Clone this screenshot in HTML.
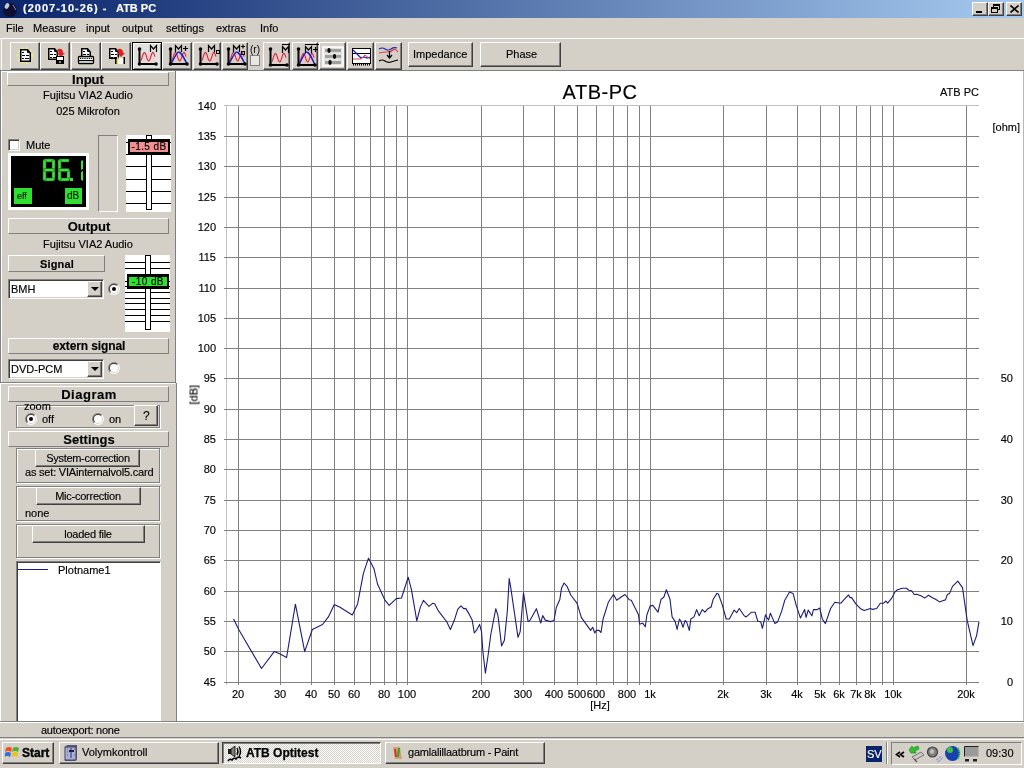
<!DOCTYPE html><html><head><meta charset="utf-8"><style>
*{margin:0;padding:0;box-sizing:border-box}
html,body{width:1024px;height:768px;overflow:hidden;background:#d4d0c8;font-family:"Liberation Sans", sans-serif;position:relative}
.t{position:absolute;white-space:nowrap;line-height:1;font-family:"Liberation Sans", sans-serif;will-change:transform;-webkit-text-stroke:0.15px currentColor}
.btn{position:absolute;background:#d4d0c8;border-top:1px solid #fff;border-left:1px solid #fff;border-right:1px solid #404040;border-bottom:1px solid #404040;box-shadow:inset -1px -1px 0 #808080}
.pnl{position:absolute;background:#d4d0c8;border-top:1px solid #fff;border-left:1px solid #fff;border-right:1px solid #808080;border-bottom:1px solid #808080}
.abs{position:absolute}
</style></head><body><div class="abs" style="left:0;top:0;width:1024px;height:18px;background:linear-gradient(to right,#0a246a,#a6caf0)"></div>
<svg class="abs" style="left:1px;top:1px" width="17" height="17" viewBox="0 0 17 17"><circle cx="9" cy="9" r="7" fill="#0d1030"/><ellipse cx="6" cy="5" rx="2" ry="3" fill="#c8c8d8" transform="rotate(30 6 5)"/><path d="M12 4 L15 9" stroke="#8890b0" stroke-width="1"/></svg>
<div class="t" style="left:23px;top:3px;font-size:11px;font-weight:bold;color:#fff;letter-spacing:1px">(2007-10-26) -</div>
<div class="t" style="left:116px;top:3px;font-size:11px;font-weight:bold;color:#fff;">ATB PC</div>
<div class="btn" style="left:972px;top:2px;width:16px;height:14px;"><div class="abs" style="left:3px;top:8px;width:6px;height:2px;background:#000"></div></div>
<div class="btn" style="left:988px;top:2px;width:16px;height:14px;"><div class="abs" style="left:4px;top:1px;width:7px;height:6px;border:1px solid #000;border-top-width:2px"></div><div class="abs" style="left:2px;top:4px;width:7px;height:6px;border:1px solid #000;border-top-width:2px;background:#d4d0c8"></div></div>
<div class="btn" style="left:1006px;top:2px;width:16px;height:14px;"><svg class="abs" style="left:3px;top:2px" width="9" height="8" viewBox="0 0 9 8"><path d="M0.5 0.5 L8.5 7.5 M8.5 0.5 L0.5 7.5" stroke="#000" stroke-width="1.6"/></svg></div>
<div class="t" style="left:6px;top:23px;font-size:11px;font-weight:normal;color:#000;">File</div>
<div class="t" style="left:33px;top:23px;font-size:11px;font-weight:normal;color:#000;">Measure</div>
<div class="t" style="left:86px;top:23px;font-size:11px;font-weight:normal;color:#000;">input</div>
<div class="t" style="left:122px;top:23px;font-size:11px;font-weight:normal;color:#000;">output</div>
<div class="t" style="left:166px;top:23px;font-size:11px;font-weight:normal;color:#000;">settings</div>
<div class="t" style="left:216px;top:23px;font-size:11px;font-weight:normal;color:#000;">extras</div>
<div class="t" style="left:260px;top:23px;font-size:11px;font-weight:normal;color:#000;">Info</div>
<div class="abs" style="left:0;top:38px;width:1024px;height:1px;background:#fff"></div>
<div class="abs" style="left:1px;top:38px;width:1px;height:32px;background:#fff"></div>
<div class="abs" style="left:0;top:70px;width:1024px;height:1px;background:#808080"></div>
<div class="btn" style="left:10px;top:42px;width:30px;height:28px;"></div>
<div class="btn" style="left:40px;top:42px;width:30px;height:28px;"></div>
<div class="btn" style="left:71px;top:42px;width:30px;height:28px;"></div>
<div class="btn" style="left:101px;top:42px;width:30px;height:28px;"></div>
<div class="abs" style="left:132px;top:42px;width:30px;height:28px;border:1px solid #000;background:#e2e0dc;box-shadow:inset 1px 1px 0 #fff, inset -1px -1px 0 #808080"></div>
<div class="btn" style="left:162px;top:42px;width:30px;height:28px;"></div>
<div class="btn" style="left:193px;top:42px;width:28px;height:28px;"></div>
<div class="btn" style="left:222px;top:42px;width:26px;height:28px;"></div>
<div class="btn" style="left:263px;top:42px;width:27px;height:28px;"></div>
<div class="btn" style="left:292px;top:42px;width:26px;height:28px;"></div>
<div class="btn" style="left:319px;top:42px;width:27px;height:28px;"></div>
<div class="btn" style="left:347px;top:42px;width:27px;height:28px;"></div>
<div class="btn" style="left:375px;top:42px;width:27px;height:28px;"></div>
<div class="btn" style="left:408px;top:42px;width:65px;height:25px;"></div>
<div class="t" style="left:413px;top:49px;font-size:11px;font-weight:normal;color:#000;">Impedance</div>
<div class="btn" style="left:480px;top:42px;width:81px;height:25px;"></div>
<div class="t" style="left:506px;top:49px;font-size:11px;font-weight:normal;color:#000;">Phase</div>
<svg class="abs" style="left:0;top:0" width="410" height="72" viewBox="0 0 410 72"><circle cx="25" cy="55.5" r="7.5" fill="none" stroke="#f0f070" stroke-width="2" stroke-dasharray="2 2.5" opacity="0.9"/><path d="M20.75 49.75 H27.5 L30.25 53 V61.25 H20.75 Z" fill="#fff" stroke="#000" stroke-width="1.5" stroke-linejoin="miter"/><path d="M27.5 50 V52.5 H30" fill="none" stroke="#000" stroke-width="1"/><rect x="22" y="52" width="2" height="1" fill="#000"/><rect x="22" y="55" width="3" height="1" fill="#000"/><rect x="26" y="55" width="3" height="1" fill="#000"/><rect x="22" y="58" width="2" height="1" fill="#000"/><rect x="25" y="58" width="4" height="1" fill="#000"/><path d="M48.75 48.75 H54.5 L57.25 52 V59.25 H48.75 Z" fill="#fff" stroke="#000" stroke-width="1.5" stroke-linejoin="miter"/><path d="M54.5 49 V51.5 H57" fill="none" stroke="#000" stroke-width="1"/><rect x="50" y="51" width="2" height="1" fill="#000"/><rect x="50" y="54" width="3" height="1" fill="#000"/><rect x="54" y="54" width="2" height="1" fill="#000"/><rect x="50" y="57" width="2" height="1" fill="#000"/><rect x="53" y="57" width="3" height="1" fill="#000"/><path d="M58 49 Q63 48 63 53 L65 53 L61 57 L57 53 L59 53 Q59 51 57 51Z" fill="#e02020"/><rect x="56" y="56" width="8" height="8" fill="#000"/><rect x="57" y="57" width="6" height="3" fill="#fff"/><rect x="59" y="61" width="2" height="2" fill="#888"/><path d="M81.75 48.75 H87.5 L90.25 52 V57.25 H81.75 Z" fill="#fff" stroke="#000" stroke-width="1.5" stroke-linejoin="miter"/><path d="M87.5 49 V51.5 H90" fill="none" stroke="#000" stroke-width="1"/><rect x="83" y="51" width="2" height="1" fill="#000"/><rect x="83" y="54" width="3" height="1" fill="#000"/><rect x="87" y="54" width="2" height="1" fill="#000"/><rect x="78.5" y="56.5" width="15" height="7" rx="1" fill="#fff" stroke="#000" stroke-width="1.3"/><rect x="79" y="60" width="14" height="1.2" fill="#000"/><rect x="80.0" y="57.8" width="1" height="1.2" fill="#000"/><rect x="81.8" y="57.8" width="1" height="1.2" fill="#000"/><rect x="83.6" y="57.8" width="1" height="1.2" fill="#000"/><rect x="85.4" y="57.8" width="1" height="1.2" fill="#000"/><rect x="87.2" y="57.8" width="1" height="1.2" fill="#000"/><rect x="89.0" y="57.8" width="1" height="1.2" fill="#000"/><rect x="90.8" y="57.8" width="1" height="1.2" fill="#000"/><path d="M109.75 48.75 H115.5 L118.25 52 V58.25 H109.75 Z" fill="#fff" stroke="#000" stroke-width="1.5" stroke-linejoin="miter"/><path d="M115.5 49 V51.5 H118" fill="none" stroke="#000" stroke-width="1"/><rect x="111" y="51" width="2" height="1" fill="#000"/><rect x="111" y="54" width="3" height="1" fill="#000"/><rect x="115" y="54" width="2" height="1" fill="#000"/><rect x="111" y="57" width="2" height="1" fill="#000"/><rect x="114" y="57" width="3" height="1" fill="#000"/><path d="M118 49 Q123 48 123 53 L125 53 L121 57 L117 53 L119 53 Q119 51 117 51Z" fill="#e02020"/><rect x="115" y="57" width="1.5" height="7" fill="#000"/><rect x="117" y="57" width="1.5" height="7" fill="#e0e040"/><rect x="118.5" y="58" width="5" height="6" fill="#fff"/><rect x="123.5" y="57" width="1.5" height="7" fill="#000"/><rect x="141" y="53" width="14" height="9" fill="#f0c8c8" opacity="0.55"/><path d="M140.6 60.8 L141.1 60.1 L141.6 59.0 L142.0 57.6 L142.5 56.1 L143.0 54.6 L143.5 53.5 L144.0 52.7 L144.4 52.5 L144.9 52.8 L145.4 53.6 L145.9 54.7 L146.4 56.2 L146.8 57.7 L147.3 59.0 L147.8 60.1 L148.3 60.8 L148.8 61.0 L149.2 60.6 L149.7 59.8 L150.2 58.6 L150.7 57.1 L151.2 55.6 L151.6 54.3 L152.1 53.2 L152.6 52.6 L153.1 52.5 L153.6 53.0 L154.0 53.9 L154.5 55.1 L155.0 56.6" fill="none" stroke="#d02838" stroke-width="1.1" stroke-linejoin="round"/><rect x="138.5" y="48" width="2" height="16" fill="#000"/><rect x="139" y="63" width="17" height="2" fill="#000"/><circle cx="139.5" cy="49" r="1.8" fill="#000"/><circle cx="139.5" cy="64" r="1.8" fill="#000"/><circle cx="156" cy="64" r="1.8" fill="#000"/><path d="M150.5 52 V45.5 L153.5 49 L156.5 45.5 V52" fill="none" stroke="#000" stroke-width="1.2"/><rect x="172" y="53" width="14" height="9" fill="#f0c8c8" opacity="0.55"/><path d="M171.6 60.8 L172.1 60.1 L172.6 59.0 L173.0 57.6 L173.5 56.1 L174.0 54.6 L174.5 53.5 L175.0 52.7 L175.4 52.5 L175.9 52.8 L176.4 53.6 L176.9 54.7 L177.4 56.2 L177.8 57.7 L178.3 59.0 L178.8 60.1 L179.3 60.8 L179.8 61.0 L180.2 60.6 L180.7 59.8 L181.2 58.6 L181.7 57.1 L182.2 55.6 L182.6 54.3 L183.1 53.2 L183.6 52.6 L184.1 52.5 L184.6 53.0 L185.0 53.9 L185.5 55.1 L186.0 56.6" fill="none" stroke="#d02838" stroke-width="1.1" stroke-linejoin="round"/><path d="M171 64 C175 56 177 52 178.5 52 C181 52 183 56 187 64" fill="none" stroke="#2020c0" stroke-width="1.5"/><rect x="169.5" y="48" width="2" height="16" fill="#000"/><rect x="170" y="63" width="17" height="2" fill="#000"/><circle cx="170.5" cy="49" r="1.8" fill="#000"/><circle cx="170.5" cy="64" r="1.8" fill="#000"/><circle cx="187" cy="64" r="1.8" fill="#000"/><path d="M175.5 52 V45.5 L178.5 49 L181.5 45.5 V52" fill="none" stroke="#000" stroke-width="1.2"/><path d="M183 48.5 H188 M185.5 46 V51" stroke="#000" stroke-width="1.2"/><rect x="202" y="53" width="14" height="9" fill="#f0c8c8" opacity="0.55"/><path d="M201.6 60.8 L202.1 60.1 L202.6 59.0 L203.0 57.6 L203.5 56.1 L204.0 54.6 L204.5 53.5 L205.0 52.7 L205.4 52.5 L205.9 52.8 L206.4 53.6 L206.9 54.7 L207.4 56.2 L207.8 57.7 L208.3 59.0 L208.8 60.1 L209.3 60.8 L209.8 61.0 L210.2 60.6 L210.7 59.8 L211.2 58.6 L211.7 57.1 L212.2 55.6 L212.6 54.3 L213.1 53.2 L213.6 52.6 L214.1 52.5 L214.6 53.0 L215.0 53.9 L215.5 55.1 L216.0 56.6" fill="none" stroke="#d02838" stroke-width="1.1" stroke-linejoin="round"/><rect x="199.5" y="48" width="2" height="16" fill="#000"/><rect x="200" y="63" width="17" height="2" fill="#000"/><circle cx="200.5" cy="49" r="1.8" fill="#000"/><circle cx="200.5" cy="64" r="1.8" fill="#000"/><circle cx="217" cy="64" r="1.8" fill="#000"/><path d="M208.5 52 V45.5 L211.5 49 L214.5 45.5 V52" fill="none" stroke="#000" stroke-width="1.2"/><rect x="216.5" y="50.5" width="3" height="3" fill="none" stroke="#000" stroke-width="1"/><rect x="230" y="53" width="14" height="9" fill="#f0c8c8" opacity="0.55"/><path d="M229.6 60.8 L230.1 60.1 L230.6 59.0 L231.0 57.6 L231.5 56.1 L232.0 54.6 L232.5 53.5 L233.0 52.7 L233.4 52.5 L233.9 52.8 L234.4 53.6 L234.9 54.7 L235.4 56.2 L235.8 57.7 L236.3 59.0 L236.8 60.1 L237.3 60.8 L237.8 61.0 L238.2 60.6 L238.7 59.8 L239.2 58.6 L239.7 57.1 L240.2 55.6 L240.6 54.3 L241.1 53.2 L241.6 52.6 L242.1 52.5 L242.6 53.0 L243.0 53.9 L243.5 55.1 L244.0 56.6" fill="none" stroke="#d02838" stroke-width="1.1" stroke-linejoin="round"/><path d="M229 64 C233 56 235 52 236.5 52 C239 52 241 56 245 64" fill="none" stroke="#2020c0" stroke-width="1.5"/><rect x="227.5" y="48" width="2" height="16" fill="#000"/><rect x="228" y="63" width="17" height="2" fill="#000"/><circle cx="228.5" cy="49" r="1.8" fill="#000"/><circle cx="228.5" cy="64" r="1.8" fill="#000"/><circle cx="245" cy="64" r="1.8" fill="#000"/><path d="M233.5 52 V45.5 L236.5 49 L239.5 45.5 V52" fill="none" stroke="#000" stroke-width="1.2"/><path d="M241 46.5 H245 M243 44.5 V48.5" stroke="#000" stroke-width="1.1"/><rect x="241.5" y="51.5" width="3" height="3" fill="none" stroke="#000"/><text x="250" y="53" font-family="Liberation Sans" font-size="10">(r)</text><rect x="250.5" y="55.5" width="9" height="10" fill="#e8e6e2" stroke="#808080"/><rect x="272" y="53" width="14" height="10" fill="#f0c8c8" opacity="0.55"/><path d="M271.6 61.8 L272.1 61.1 L272.6 60.0 L273.0 58.6 L273.5 57.1 L274.0 55.6 L274.5 54.5 L275.0 53.7 L275.4 53.5 L275.9 53.8 L276.4 54.6 L276.9 55.7 L277.4 57.2 L277.8 58.7 L278.3 60.0 L278.8 61.1 L279.3 61.8 L279.8 62.0 L280.2 61.6 L280.7 60.8 L281.2 59.6 L281.7 58.1 L282.2 56.6 L282.6 55.3 L283.1 54.2 L283.6 53.6 L284.1 53.5 L284.6 54.0 L285.0 54.9 L285.5 56.1 L286.0 57.6" fill="none" stroke="#d02838" stroke-width="1.1" stroke-linejoin="round"/><rect x="269.5" y="48" width="2" height="17" fill="#000"/><rect x="270" y="64" width="17" height="2" fill="#000"/><circle cx="270.5" cy="49" r="1.8" fill="#000"/><circle cx="270.5" cy="65" r="1.8" fill="#000"/><circle cx="287" cy="65" r="1.8" fill="#000"/><path d="M282.5 53 V46.5 L285.5 50 L288.5 46.5 V53" fill="none" stroke="#000" stroke-width="1.2"/><rect x="282" y="44" width="8" height="1" fill="#000"/><rect x="300" y="53" width="14" height="10" fill="#f0c8c8" opacity="0.55"/><path d="M299.6 61.8 L300.1 61.1 L300.6 60.0 L301.0 58.6 L301.5 57.1 L302.0 55.6 L302.5 54.5 L303.0 53.7 L303.4 53.5 L303.9 53.8 L304.4 54.6 L304.9 55.7 L305.4 57.2 L305.8 58.7 L306.3 60.0 L306.8 61.1 L307.3 61.8 L307.8 62.0 L308.2 61.6 L308.7 60.8 L309.2 59.6 L309.7 58.1 L310.2 56.6 L310.6 55.3 L311.1 54.2 L311.6 53.6 L312.1 53.5 L312.6 54.0 L313.0 54.9 L313.5 56.1 L314.0 57.6" fill="none" stroke="#d02838" stroke-width="1.1" stroke-linejoin="round"/><path d="M299 65 C303 56 305 52 306.5 52 C309 52 311 56 315 65" fill="none" stroke="#2020c0" stroke-width="1.5"/><rect x="297.5" y="48" width="2" height="17" fill="#000"/><rect x="298" y="64" width="17" height="2" fill="#000"/><circle cx="298.5" cy="49" r="1.8" fill="#000"/><circle cx="298.5" cy="65" r="1.8" fill="#000"/><circle cx="315" cy="65" r="1.8" fill="#000"/><path d="M305.5 53 V46.5 L308.5 50 L311.5 46.5 V53" fill="none" stroke="#000" stroke-width="1.2"/><path d="M313 49.5 H318 M315.5 47 V52" stroke="#000" stroke-width="1.2"/><rect x="305" y="44" width="14" height="1" fill="#000"/><rect x="323" y="47" width="20" height="19" fill="#e4e2de" stroke="#fff" stroke-width="1.5"/><rect x="325" y="49" width="16" height="3" fill="#a0a0a0"/><ellipse cx="329" cy="50.5" rx="1.6" ry="2.4" fill="#000"/><rect x="325" y="55" width="16" height="3" fill="#a0a0a0"/><ellipse cx="334.5" cy="56.5" rx="1.6" ry="2.4" fill="#000"/><rect x="325" y="61" width="16" height="3" fill="#a0a0a0"/><ellipse cx="330" cy="62.5" rx="1.6" ry="2.4" fill="#000"/><rect x="352.5" y="48.5" width="18" height="15" fill="#fff" stroke="#000"/><rect x="352" y="53" width="19" height="1" fill="#000"/><path d="M353 50 L361 58 L364 57 L367 58 L370 57" fill="none" stroke="#2020b0" stroke-width="1.3"/><path d="M353 59 L361 59 L365 55 L370 59" fill="none" stroke="#e04040" stroke-width="1"/><rect x="353" y="64" width="1" height="1.5" fill="#000"/><rect x="355" y="64" width="1" height="1.5" fill="#000"/><rect x="357" y="64" width="1" height="1.5" fill="#000"/><rect x="359" y="64" width="1" height="1.5" fill="#000"/><rect x="361" y="64" width="1" height="1.5" fill="#000"/><rect x="363" y="64" width="1" height="1.5" fill="#000"/><rect x="365" y="64" width="1" height="1.5" fill="#000"/><rect x="367" y="64" width="1" height="1.5" fill="#000"/><rect x="369" y="64" width="1" height="1.5" fill="#000"/><path d="M379 49 Q382 47 385 49 T391 49 T397 48" fill="none" stroke="#2020c0" stroke-width="1.2"/><path d="M379 53 Q383 52 387 52 T393 50 T398 52" fill="none" stroke="#e04040" stroke-width="1.2"/><path d="M389.5 51 V57 M387 55 L389.5 58 L392 55" fill="none" stroke="#000" stroke-width="1.2"/><path d="M379 61 Q382 59 385 61 T391 62 T398 60" fill="none" stroke="#000" stroke-width="1.2"/></svg>
<div class="abs" style="left:0;top:71px;width:1px;height:312px;background:#808080"></div>
<div class="abs" style="left:1px;top:71px;width:1px;height:311px;background:#fff"></div>
<div class="abs" style="left:1px;top:71px;width:174px;height:1px;background:#fff"></div>
<div class="abs" style="left:0;top:382px;width:176px;height:1px;background:#808080"></div>
<div class="abs" style="left:0;top:383px;width:176px;height:1px;background:#fff"></div>
<div class="abs" style="left:0;top:383px;width:1px;height:338px;background:#fff"></div>
<div class="abs" style="left:175px;top:71px;width:1px;height:312px;background:#808080"></div>
<div class="pnl" style="left:7px;top:72px;width:162px;height:14px;"></div>
<div class="t" style="left:-62.0px;width:300px;text-align:center;top:73.0px;font-size:13px;font-weight:bold;color:#000;letter-spacing:0px">Input</div>
<div class="t" style="left:-62px;width:300px;text-align:center;top:90px;font-size:11px;font-weight:normal;color:#000;">Fujitsu VIA2 Audio</div>
<div class="t" style="left:-62px;width:300px;text-align:center;top:106px;font-size:11px;font-weight:normal;color:#000;">025 Mikrofon</div>
<div class="abs" style="left:8px;top:139px;width:12px;height:12px;background:#fff;border-top:1px solid #808080;border-left:1px solid #808080;border-right:1px solid #fff;border-bottom:1px solid #fff;box-shadow:inset 1px 1px 0 #404040,inset -1px -1px 0 #d4d0c8"></div>
<div class="t" style="left:26px;top:140px;font-size:11px;font-weight:normal;color:#000;">Mute</div>
<div class="abs" style="left:8px;top:153px;width:81px;height:57px;background:#fff"></div>
<div class="abs" style="left:11px;top:156px;width:75px;height:51px;background:#000"></div>
<svg class="abs" style="left:0;top:0" width="176" height="400"><rect x="44" y="159" width="10" height="3" fill="#40e040" stroke="#1a5a1a" stroke-width="0.5"/><rect x="52" y="160" width="3" height="10.0" fill="#40e040" stroke="#1a5a1a" stroke-width="0.5"/><rect x="52" y="170.0" width="3" height="10.0" fill="#40e040" stroke="#1a5a1a" stroke-width="0.5"/><rect x="44" y="178" width="10" height="3" fill="#40e040" stroke="#1a5a1a" stroke-width="0.5"/><rect x="43" y="170.0" width="3" height="10.0" fill="#40e040" stroke="#1a5a1a" stroke-width="0.5"/><rect x="43" y="160" width="3" height="10.0" fill="#40e040" stroke="#1a5a1a" stroke-width="0.5"/><rect x="44" y="168.5" width="10" height="3" fill="#40e040" stroke="#1a5a1a" stroke-width="0.5"/><rect x="59" y="159" width="10" height="3" fill="#40e040" stroke="#1a5a1a" stroke-width="0.5"/><rect x="67" y="170.0" width="3" height="10.0" fill="#40e040" stroke="#1a5a1a" stroke-width="0.5"/><rect x="59" y="178" width="10" height="3" fill="#40e040" stroke="#1a5a1a" stroke-width="0.5"/><rect x="58" y="170.0" width="3" height="10.0" fill="#40e040" stroke="#1a5a1a" stroke-width="0.5"/><rect x="58" y="160" width="3" height="10.0" fill="#40e040" stroke="#1a5a1a" stroke-width="0.5"/><rect x="59" y="168.5" width="10" height="3" fill="#40e040" stroke="#1a5a1a" stroke-width="0.5"/><path d="M81 161 L83 160 V169 L81 170Z M81 172 L83 171 V181 L81 180Z" fill="#40e040"/><rect x="70" y="178" width="3" height="3" fill="#40e040"/></svg>
<div class="abs" style="left:14px;top:188px;width:18px;height:16px;background:#30e030"></div>
<div class="t" style="left:17px;top:192px;font-size:9px;font-weight:normal;color:#102010;">eff</div>
<div class="abs" style="left:65px;top:188px;width:17px;height:16px;background:#30e030"></div>
<div class="t" style="left:67px;top:191px;font-size:10px;font-weight:normal;color:#102010;">dB</div>
<div class="abs" style="left:98px;top:135px;width:20px;height:77px;background:#d4d0c8;border-top:1px solid #808080;border-left:1px solid #808080;border-right:1px solid #fff;border-bottom:1px solid #fff"></div>
<div class="abs" style="left:126px;top:135px;width:45px;height:77px;background:#fff"></div>
<div class="abs" style="left:126px;top:142px;width:45px;height:1px;background:#000"></div>
<div class="abs" style="left:126px;top:154px;width:45px;height:1px;background:#000"></div>
<div class="abs" style="left:126px;top:166px;width:45px;height:1px;background:#000"></div>
<div class="abs" style="left:126px;top:179px;width:45px;height:1px;background:#000"></div>
<div class="abs" style="left:126px;top:191px;width:45px;height:1px;background:#000"></div>
<div class="abs" style="left:126px;top:203px;width:45px;height:1px;background:#000"></div>
<div class="abs" style="left:146px;top:135px;width:6px;height:75px;background:#fff;border:1px solid #000"></div>
<div class="abs" style="left:128px;top:139px;width:42px;height:16px;background:#f09090;border:2px solid #000;border-top-width:3px;border-bottom-width:3px"></div>
<div class="t" style="left:128px;top:142px;width:42px;text-align:center;font-size:10px;letter-spacing:0.4px;color:#000">-1.5 dB</div>
<div class="pnl" style="left:8px;top:218px;width:161px;height:16px;"></div>
<div class="t" style="left:-61.5px;width:300px;text-align:center;top:220.0px;font-size:13px;font-weight:bold;color:#000;letter-spacing:0px">Output</div>
<div class="t" style="left:-62px;width:300px;text-align:center;top:239px;font-size:11px;font-weight:normal;color:#000;">Fujitsu VIA2 Audio</div>
<div class="pnl" style="left:8px;top:255px;width:97px;height:17px;"></div>
<div class="t" style="left:-93.5px;width:300px;text-align:center;top:258.5px;font-size:11px;font-weight:bold;color:#000;letter-spacing:0.2px">Signal</div>
<div class="abs" style="left:8px;top:279px;width:96px;height:20px;background:#fff;border-top:1px solid #808080;border-left:1px solid #808080;border-right:1px solid #fff;border-bottom:1px solid #fff;box-shadow:inset 1px 1px 0 #404040,inset -1px -1px 0 #d4d0c8"></div>
<div class="t" style="left:11px;top:284px;font-size:11px;font-weight:normal;color:#000;">BMH</div>
<div class="btn" style="left:87px;top:281px;width:15px;height:16px;"><div class="abs" style="left:3px;top:5px;width:0;height:0;border-left:4px solid transparent;border-right:4px solid transparent;border-top:4px solid #000"></div></div>
<svg class="abs" style="left:108px;top:283px" width="12" height="12" viewBox="0 0 12 12"><path d="M1.8 10.2 A5.9 5.9 0 0 1 10.2 1.8 Z" fill="#808080"/><path d="M10.2 1.8 A5.9 5.9 0 0 1 1.8 10.2 Z" fill="#fff"/><path d="M2.5 9.5 A4.9 4.9 0 0 1 9.5 2.5 Z" fill="#404040"/><path d="M9.5 2.5 A4.9 4.9 0 0 1 2.5 9.5 Z" fill="#d4d0c8"/><circle cx="6" cy="6" r="4" fill="#fff"/><circle cx="6" cy="6" r="2" fill="#000"/></svg>
<div class="abs" style="left:125px;top:255px;width:45px;height:77px;background:#fff"></div>
<div class="abs" style="left:125px;top:262px;width:45px;height:1px;background:#000"></div>
<div class="abs" style="left:125px;top:268px;width:45px;height:1px;background:#000"></div>
<div class="abs" style="left:125px;top:281px;width:45px;height:1px;background:#000"></div>
<div class="abs" style="left:125px;top:286px;width:45px;height:1px;background:#000"></div>
<div class="abs" style="left:125px;top:292px;width:45px;height:1px;background:#000"></div>
<div class="abs" style="left:125px;top:298px;width:45px;height:1px;background:#000"></div>
<div class="abs" style="left:125px;top:303px;width:45px;height:1px;background:#000"></div>
<div class="abs" style="left:125px;top:309px;width:45px;height:1px;background:#000"></div>
<div class="abs" style="left:125px;top:315px;width:45px;height:1px;background:#000"></div>
<div class="abs" style="left:125px;top:321px;width:45px;height:1px;background:#000"></div>
<div class="abs" style="left:145px;top:255px;width:6px;height:75px;background:#fff;border:1px solid #000"></div>
<div class="abs" style="left:127px;top:274px;width:42px;height:15px;background:#30e030;border:2px solid #000;border-top-width:3px;border-bottom-width:3px"></div>
<div class="t" style="left:127px;top:277px;width:42px;text-align:center;font-size:10px;letter-spacing:0.4px;color:#000">-10 dB</div>
<div class="pnl" style="left:8px;top:338px;width:161px;height:16px;"></div>
<div class="t" style="left:-61.5px;width:300px;text-align:center;top:340.0px;font-size:12px;font-weight:bold;color:#000;letter-spacing:-0.1px">extern signal</div>
<div class="abs" style="left:8px;top:359px;width:96px;height:20px;background:#fff;border-top:1px solid #808080;border-left:1px solid #808080;border-right:1px solid #fff;border-bottom:1px solid #fff;box-shadow:inset 1px 1px 0 #404040,inset -1px -1px 0 #d4d0c8"></div>
<div class="t" style="left:11px;top:364px;font-size:11px;font-weight:normal;color:#000;">DVD-PCM</div>
<div class="btn" style="left:87px;top:361px;width:15px;height:16px;"><div class="abs" style="left:3px;top:5px;width:0;height:0;border-left:4px solid transparent;border-right:4px solid transparent;border-top:4px solid #000"></div></div>
<svg class="abs" style="left:108px;top:362px" width="12" height="12" viewBox="0 0 12 12"><path d="M1.8 10.2 A5.9 5.9 0 0 1 10.2 1.8 Z" fill="#808080"/><path d="M10.2 1.8 A5.9 5.9 0 0 1 1.8 10.2 Z" fill="#fff"/><path d="M2.5 9.5 A4.9 4.9 0 0 1 9.5 2.5 Z" fill="#404040"/><path d="M9.5 2.5 A4.9 4.9 0 0 1 2.5 9.5 Z" fill="#d4d0c8"/><circle cx="6" cy="6" r="4" fill="#fff"/></svg>
<div class="pnl" style="left:8px;top:386px;width:161px;height:16px;"></div>
<div class="t" style="left:-61.5px;width:300px;text-align:center;top:388.0px;font-size:13px;font-weight:bold;color:#000;letter-spacing:0.5px">Diagram</div>
<div class="abs" style="left:16px;top:405px;width:144px;height:23px;border:1px solid #808080;box-shadow:1px 1px 0 #fff, inset 1px 1px 0 #fff"></div>
<div class="t" style="left:24px;top:401px;font-size:11px;font-weight:normal;color:#000;">zoom</div>
<svg class="abs" style="left:25px;top:413px" width="12" height="12" viewBox="0 0 12 12"><path d="M1.8 10.2 A5.9 5.9 0 0 1 10.2 1.8 Z" fill="#808080"/><path d="M10.2 1.8 A5.9 5.9 0 0 1 1.8 10.2 Z" fill="#fff"/><path d="M2.5 9.5 A4.9 4.9 0 0 1 9.5 2.5 Z" fill="#404040"/><path d="M9.5 2.5 A4.9 4.9 0 0 1 2.5 9.5 Z" fill="#d4d0c8"/><circle cx="6" cy="6" r="4" fill="#fff"/><circle cx="6" cy="6" r="2" fill="#000"/></svg>
<div class="t" style="left:42px;top:414px;font-size:11px;font-weight:normal;color:#000;">off</div>
<svg class="abs" style="left:92px;top:413px" width="12" height="12" viewBox="0 0 12 12"><path d="M1.8 10.2 A5.9 5.9 0 0 1 10.2 1.8 Z" fill="#808080"/><path d="M10.2 1.8 A5.9 5.9 0 0 1 1.8 10.2 Z" fill="#fff"/><path d="M2.5 9.5 A4.9 4.9 0 0 1 9.5 2.5 Z" fill="#404040"/><path d="M9.5 2.5 A4.9 4.9 0 0 1 2.5 9.5 Z" fill="#d4d0c8"/><circle cx="6" cy="6" r="4" fill="#fff"/></svg>
<div class="t" style="left:109px;top:414px;font-size:11px;font-weight:normal;color:#000;">on</div>
<div class="btn" style="left:134px;top:405px;width:24px;height:21px;"></div>
<div class="t" style="left:143px;top:410px;font-size:12px;font-weight:normal;color:#000;">?</div>
<div class="pnl" style="left:8px;top:431px;width:161px;height:16px;"></div>
<div class="t" style="left:-61.5px;width:300px;text-align:center;top:433.0px;font-size:13px;font-weight:bold;color:#000;letter-spacing:0px">Settings</div>
<div class="abs" style="left:16px;top:448px;width:144px;height:35px;border:1px solid #808080;box-shadow:1px 1px 0 #fff, inset 1px 1px 0 #fff"></div>
<div class="btn" style="left:35px;top:449px;width:105px;height:18px;"></div>
<div class="t" style="left:-62px;width:300px;text-align:center;top:453px;font-size:11px;font-weight:normal;color:#000;letter-spacing:-0.3px">System-correction</div>
<div class="t" style="left:25px;top:467px;font-size:11px;font-weight:normal;color:#000;letter-spacing:-0.2px">as set: VIAinternalvol5.card</div>
<div class="abs" style="left:16px;top:486px;width:144px;height:35px;border:1px solid #808080;box-shadow:1px 1px 0 #fff, inset 1px 1px 0 #fff"></div>
<div class="btn" style="left:36px;top:487px;width:105px;height:18px;"></div>
<div class="t" style="left:-62px;width:300px;text-align:center;top:491px;font-size:11px;font-weight:normal;color:#000;letter-spacing:-0.25px">Mic-correction</div>
<div class="t" style="left:25px;top:508px;font-size:11px;font-weight:normal;color:#000;">none</div>
<div class="abs" style="left:16px;top:524px;width:144px;height:34px;border:1px solid #808080;box-shadow:1px 1px 0 #fff, inset 1px 1px 0 #fff"></div>
<div class="btn" style="left:32px;top:525px;width:113px;height:18px;"></div>
<div class="t" style="left:-62px;width:300px;text-align:center;top:529px;font-size:11px;font-weight:normal;color:#000;letter-spacing:-0.25px">loaded file</div>
<div class="abs" style="left:16px;top:561px;width:145px;height:160px;background:#fff;border-top:1px solid #808080;border-left:1px solid #808080;border-right:1px solid #fff;box-shadow:inset 1px 1px 0 #404040"></div>
<div class="abs" style="left:18px;top:569px;width:30px;height:1px;background:#202070"></div>
<div class="t" style="left:58px;top:565px;font-size:11px;font-weight:normal;color:#000;">Plotname1</div>
<div class="abs" style="left:176px;top:71px;width:847px;height:650px;background:#fff"></div>
<div class="abs" style="left:176px;top:383px;width:1px;height:338px;background:#808080"></div>
<div class="abs" style="left:175px;top:383px;width:1px;height:338px;background:#d4d0c8"></div>
<div class="abs" style="left:1023px;top:71px;width:1px;height:651px;background:#b8b8b8"></div>
<svg class="abs" style="left:0;top:0" width="1024" height="768" viewBox="0 0 1024 768" shape-rendering="crispEdges"><rect x="226" y="105" width="1" height="580" fill="#c0c0c0"/><rect x="238" y="105" width="1" height="580" fill="#808080"/><rect x="280" y="105" width="1" height="580" fill="#808080"/><rect x="311" y="105" width="1" height="580" fill="#808080"/><rect x="334" y="105" width="1" height="580" fill="#808080"/><rect x="354" y="105" width="1" height="580" fill="#808080"/><rect x="370" y="105" width="1" height="580" fill="#808080"/><rect x="384" y="105" width="1" height="580" fill="#808080"/><rect x="396" y="105" width="1" height="580" fill="#808080"/><rect x="407" y="105" width="1" height="580" fill="#808080"/><rect x="481" y="105" width="1" height="580" fill="#808080"/><rect x="523" y="105" width="1" height="580" fill="#808080"/><rect x="554" y="105" width="1" height="580" fill="#808080"/><rect x="577" y="105" width="1" height="580" fill="#808080"/><rect x="596" y="105" width="1" height="580" fill="#808080"/><rect x="613" y="105" width="1" height="580" fill="#808080"/><rect x="627" y="105" width="1" height="580" fill="#808080"/><rect x="639" y="105" width="1" height="580" fill="#808080"/><rect x="650" y="105" width="1" height="580" fill="#808080"/><rect x="723" y="105" width="1" height="580" fill="#808080"/><rect x="766" y="105" width="1" height="580" fill="#808080"/><rect x="797" y="105" width="1" height="580" fill="#808080"/><rect x="820" y="105" width="1" height="580" fill="#808080"/><rect x="839" y="105" width="1" height="580" fill="#808080"/><rect x="856" y="105" width="1" height="580" fill="#808080"/><rect x="870" y="105" width="1" height="580" fill="#808080"/><rect x="882" y="105" width="1" height="580" fill="#808080"/><rect x="893" y="105" width="1" height="580" fill="#808080"/><rect x="966" y="105" width="1" height="580" fill="#808080"/><rect x="224" y="105" width="755" height="1" fill="#c0c0c0"/><rect x="224" y="136" width="755" height="1" fill="#808080"/><rect x="224" y="166" width="755" height="1" fill="#808080"/><rect x="224" y="197" width="755" height="1" fill="#808080"/><rect x="224" y="227" width="755" height="1" fill="#808080"/><rect x="224" y="257" width="755" height="1" fill="#808080"/><rect x="224" y="288" width="755" height="1" fill="#808080"/><rect x="224" y="318" width="755" height="1" fill="#808080"/><rect x="224" y="348" width="755" height="1" fill="#808080"/><rect x="224" y="378" width="755" height="1" fill="#808080"/><rect x="224" y="409" width="755" height="1" fill="#808080"/><rect x="224" y="439" width="755" height="1" fill="#808080"/><rect x="224" y="469" width="755" height="1" fill="#808080"/><rect x="224" y="500" width="755" height="1" fill="#808080"/><rect x="224" y="530" width="755" height="1" fill="#808080"/><rect x="224" y="560" width="755" height="1" fill="#808080"/><rect x="224" y="591" width="755" height="1" fill="#808080"/><rect x="224" y="621" width="755" height="1" fill="#808080"/><rect x="224" y="651" width="755" height="1" fill="#808080"/><rect x="224" y="682" width="755" height="1" fill="#808080"/></svg>
<div class="t" style="left:-84px;width:300px;text-align:right;top:100.5px;font-size:11px;font-weight:normal;color:#000;">140</div>
<div class="t" style="left:-84px;width:300px;text-align:right;top:130.5px;font-size:11px;font-weight:normal;color:#000;">135</div>
<div class="t" style="left:-84px;width:300px;text-align:right;top:160.5px;font-size:11px;font-weight:normal;color:#000;">130</div>
<div class="t" style="left:-84px;width:300px;text-align:right;top:191.5px;font-size:11px;font-weight:normal;color:#000;">125</div>
<div class="t" style="left:-84px;width:300px;text-align:right;top:221.5px;font-size:11px;font-weight:normal;color:#000;">120</div>
<div class="t" style="left:-84px;width:300px;text-align:right;top:251.5px;font-size:11px;font-weight:normal;color:#000;">115</div>
<div class="t" style="left:-84px;width:300px;text-align:right;top:282.5px;font-size:11px;font-weight:normal;color:#000;">110</div>
<div class="t" style="left:-84px;width:300px;text-align:right;top:312.5px;font-size:11px;font-weight:normal;color:#000;">105</div>
<div class="t" style="left:-84px;width:300px;text-align:right;top:342.5px;font-size:11px;font-weight:normal;color:#000;">100</div>
<div class="t" style="left:-84px;width:300px;text-align:right;top:372.5px;font-size:11px;font-weight:normal;color:#000;">95</div>
<div class="t" style="left:-84px;width:300px;text-align:right;top:403.5px;font-size:11px;font-weight:normal;color:#000;">90</div>
<div class="t" style="left:-84px;width:300px;text-align:right;top:433.5px;font-size:11px;font-weight:normal;color:#000;">85</div>
<div class="t" style="left:-84px;width:300px;text-align:right;top:463.5px;font-size:11px;font-weight:normal;color:#000;">80</div>
<div class="t" style="left:-84px;width:300px;text-align:right;top:494.5px;font-size:11px;font-weight:normal;color:#000;">75</div>
<div class="t" style="left:-84px;width:300px;text-align:right;top:524.5px;font-size:11px;font-weight:normal;color:#000;">70</div>
<div class="t" style="left:-84px;width:300px;text-align:right;top:554.5px;font-size:11px;font-weight:normal;color:#000;">65</div>
<div class="t" style="left:-84px;width:300px;text-align:right;top:585.5px;font-size:11px;font-weight:normal;color:#000;">60</div>
<div class="t" style="left:-84px;width:300px;text-align:right;top:615.5px;font-size:11px;font-weight:normal;color:#000;">55</div>
<div class="t" style="left:-84px;width:300px;text-align:right;top:645.5px;font-size:11px;font-weight:normal;color:#000;">50</div>
<div class="t" style="left:-84px;width:300px;text-align:right;top:676.5px;font-size:11px;font-weight:normal;color:#000;">45</div>
<div class="t" style="left:713px;width:300px;text-align:right;top:676.5px;font-size:11px;font-weight:normal;color:#000;">0</div>
<div class="t" style="left:713px;width:300px;text-align:right;top:615.5px;font-size:11px;font-weight:normal;color:#000;">10</div>
<div class="t" style="left:713px;width:300px;text-align:right;top:554.5px;font-size:11px;font-weight:normal;color:#000;">20</div>
<div class="t" style="left:713px;width:300px;text-align:right;top:494.5px;font-size:11px;font-weight:normal;color:#000;">30</div>
<div class="t" style="left:713px;width:300px;text-align:right;top:433.5px;font-size:11px;font-weight:normal;color:#000;">40</div>
<div class="t" style="left:713px;width:300px;text-align:right;top:372.5px;font-size:11px;font-weight:normal;color:#000;">50</div>
<div class="t" style="left:87.5px;width:300px;text-align:center;top:689px;font-size:11px;font-weight:normal;color:#000;">20</div>
<div class="t" style="left:129.5px;width:300px;text-align:center;top:689px;font-size:11px;font-weight:normal;color:#000;">30</div>
<div class="t" style="left:160.5px;width:300px;text-align:center;top:689px;font-size:11px;font-weight:normal;color:#000;">40</div>
<div class="t" style="left:183.5px;width:300px;text-align:center;top:689px;font-size:11px;font-weight:normal;color:#000;">50</div>
<div class="t" style="left:203.5px;width:300px;text-align:center;top:689px;font-size:11px;font-weight:normal;color:#000;">60</div>
<div class="t" style="left:233.5px;width:300px;text-align:center;top:689px;font-size:11px;font-weight:normal;color:#000;">80</div>
<div class="t" style="left:256.5px;width:300px;text-align:center;top:689px;font-size:11px;font-weight:normal;color:#000;">100</div>
<div class="t" style="left:330.5px;width:300px;text-align:center;top:689px;font-size:11px;font-weight:normal;color:#000;">200</div>
<div class="t" style="left:372.5px;width:300px;text-align:center;top:689px;font-size:11px;font-weight:normal;color:#000;">300</div>
<div class="t" style="left:403.5px;width:300px;text-align:center;top:689px;font-size:11px;font-weight:normal;color:#000;">400</div>
<div class="t" style="left:426.5px;width:300px;text-align:center;top:689px;font-size:11px;font-weight:normal;color:#000;">500</div>
<div class="t" style="left:445.5px;width:300px;text-align:center;top:689px;font-size:11px;font-weight:normal;color:#000;">600</div>
<div class="t" style="left:476.5px;width:300px;text-align:center;top:689px;font-size:11px;font-weight:normal;color:#000;">800</div>
<div class="t" style="left:499.5px;width:300px;text-align:center;top:689px;font-size:11px;font-weight:normal;color:#000;">1k</div>
<div class="t" style="left:572.5px;width:300px;text-align:center;top:689px;font-size:11px;font-weight:normal;color:#000;">2k</div>
<div class="t" style="left:615.5px;width:300px;text-align:center;top:689px;font-size:11px;font-weight:normal;color:#000;">3k</div>
<div class="t" style="left:646.5px;width:300px;text-align:center;top:689px;font-size:11px;font-weight:normal;color:#000;">4k</div>
<div class="t" style="left:669.5px;width:300px;text-align:center;top:689px;font-size:11px;font-weight:normal;color:#000;">5k</div>
<div class="t" style="left:688.5px;width:300px;text-align:center;top:689px;font-size:11px;font-weight:normal;color:#000;">6k</div>
<div class="t" style="left:705.5px;width:300px;text-align:center;top:689px;font-size:11px;font-weight:normal;color:#000;">7k</div>
<div class="t" style="left:719.5px;width:300px;text-align:center;top:689px;font-size:11px;font-weight:normal;color:#000;">8k</div>
<div class="t" style="left:742.5px;width:300px;text-align:center;top:689px;font-size:11px;font-weight:normal;color:#000;">10k</div>
<div class="t" style="left:815.5px;width:300px;text-align:center;top:689px;font-size:11px;font-weight:normal;color:#000;">20k</div>
<div class="t" style="left:450px;width:300px;text-align:center;top:700px;font-size:11px;font-weight:normal;color:#000;">[Hz]</div>
<div class="t" style="left:185px;top:390px;width:18px;font-size:11px;transform:rotate(-90deg);transform-origin:center;text-align:center">[dB]</div>
<div class="t" style="left:450px;width:300px;text-align:center;top:82px;font-size:20px;font-weight:normal;color:#000;letter-spacing:0.5px">ATB-PC</div>
<div class="t" style="left:679px;width:300px;text-align:right;top:87px;font-size:11px;font-weight:normal;color:#000;">ATB PC</div>
<div class="t" style="left:720px;width:300px;text-align:right;top:122px;font-size:11px;font-weight:normal;color:#000;">[ohm]</div>
<svg class="abs" style="left:0;top:0" width="1024" height="768"><path d="M233.6 619.0 L238.7 629.5 L261.5 668.5 L274.2 651.6 L280.2 654.1 L286.6 657.5 L295.4 604.2 L304.7 651.6 L312.3 629.5 L322.5 624.5 L328.4 616.9 L334.3 604.5 L340.0 607.2 L352.3 615.0 L357.6 603.9 L363.4 573.4 L368.5 558.2 L374.0 568.8 L377.5 584.0 L385.1 600.4 L389.2 605.3 L396.3 598.6 L401.5 598.0 L408.2 577.2 L411.5 589.8 L416.8 620.9 L420.3 607.4 L423.4 600.4 L429.0 606.3 L432.6 603.3 L434.7 603.7 L438.4 610.9 L442.0 615.6 L446.6 621.5 L450.4 629.5 L454.3 620.3 L457.8 609.2 L461.0 605.8 L463.6 608.7 L465.7 608.4 L469.3 614.4 L472.2 620.1 L474.3 633.0 L476.5 630.2 L479.6 624.4 L481.5 631.6 L482.9 651.7 L485.4 673.2 L488.0 656.0 L490.8 634.5 L495.8 608.7 L498.0 615.8 L501.6 645.9 L504.4 640.2 L507.3 611.5 L509.2 578.6 L510.9 588.6 L518.0 637.3 L520.2 631.6 L523.5 592.9 L528.1 621.6 L530.2 620.1 L536.4 608.7 L540.7 623.0 L542.7 615.6 L545.3 620.1 L550.3 621.6 L554.0 620.5 L556.3 607.5 L559.9 599.2 L561.5 588.2 L564.1 583.0 L567.2 586.7 L570.8 595.0 L577.1 603.3 L581.3 617.4 L585.4 623.1 L590.6 630.4 L592.7 627.3 L594.8 633.0 L596.4 630.4 L599.0 630.4 L601.0 632.5 L603.1 619.0 L608.3 602.3 L613.5 594.5 L616.7 600.2 L620.8 597.3 L625.0 594.5 L629.2 599.7 L631.3 600.2 L638.5 614.8 L639.6 624.2 L642.7 623.1 L645.3 626.8 L646.9 614.8 L650.2 605.9 L652.8 605.4 L658.0 612.2 L661.1 599.2 L663.8 597.3 L666.4 589.8 L670.0 599.2 L672.1 616.9 L675.2 621.6 L677.1 629.4 L679.4 619.0 L680.9 621.0 L683.0 627.3 L685.1 620.5 L686.7 622.1 L689.3 630.4 L690.8 619.0 L694.0 616.9 L696.6 609.6 L699.2 615.8 L702.3 609.6 L704.9 612.2 L707.5 609.1 L711.1 607.0 L713.2 599.2 L716.9 593.4 L718.4 594.0 L722.1 604.4 L726.2 619.0 L729.4 619.0 L734.1 610.1 L736.7 612.7 L739.3 608.5 L744.2 615.8 L746.2 616.9 L751.5 612.2 L755.1 612.2 L757.7 621.0 L760.8 622.1 L762.4 628.3 L765.5 614.8 L767.1 617.9 L768.6 620.0 L770.4 613.2 L774.9 623.6 L777.5 622.1 L781.7 611.1 L784.8 600.2 L789.5 591.9 L793.1 593.4 L796.2 605.4 L800.4 617.9 L804.6 609.6 L806.1 617.4 L808.2 610.1 L811.9 615.8 L813.4 609.6 L817.1 609.6 L819.7 608.0 L822.3 619.0 L825.4 623.6 L830.6 608.5 L834.8 602.3 L840.7 603.3 L845.4 598.1 L848.5 595.0 L850.1 597.6 L851.7 597.6 L855.8 603.9 L861.0 609.1 L864.2 610.6 L870.4 608.5 L872.5 609.4 L876.7 608.5 L880.3 603.3 L883.4 603.3 L886.0 601.0 L887.6 603.1 L891.8 598.1 L894.9 591.9 L897.5 589.8 L902.2 588.2 L906.4 588.2 L909.0 590.3 L911.6 590.8 L914.2 594.5 L916.8 594.2 L921.5 596.0 L924.6 598.1 L928.5 595.2 L932.0 597.5 L935.5 599.3 L939.6 601.9 L942.6 600.7 L945.5 599.9 L947.3 594.6 L949.6 593.4 L952.5 586.4 L957.8 581.1 L962.5 587.6 L967.2 620.4 L973.0 645.6 L976.6 635.6 L979.0 621.6" stroke="#1c1c78" stroke-width="1.1" fill="none" stroke-linejoin="round"/></svg>
<div class="abs" style="left:0;top:721px;width:1024px;height:1px;background:#808080"></div>
<div class="abs" style="left:0;top:722px;width:1024px;height:1px;background:#fff"></div>
<div class="t" style="left:41px;top:725px;font-size:11px;font-weight:normal;color:#000;letter-spacing:-0.25px">autoexport: none</div>
<div class="abs" style="left:0;top:738px;width:1024px;height:30px;background:#d4d0c8"></div>
<div class="abs" style="left:0;top:737px;width:1024px;height:1px;background:#808080"></div>
<div class="abs" style="left:0;top:739px;width:1024px;height:1px;background:#fff"></div>
<div class="btn" style="left:2px;top:742px;width:52px;height:22px;"></div>
<svg class="abs" style="left:5px;top:746px" width="16" height="14" viewBox="0 0 16 14"><path d="M1 2 Q4 0 7 2 L6 6 Q3 4 0 6Z" fill="#f05020"/><path d="M8 2 Q11 0 14 2 L13 6 Q10 4 7 6Z" fill="#50b030"/><path d="M0 7 Q3 5 6 7 L5 11 Q2 9 -1 11Z" fill="#3070e0"/><path d="M7 7 Q10 5 13 7 L12 11 Q9 9 6 11Z" fill="#f0c020"/></svg>
<div class="t" style="left:22px;top:747px;font-size:12px;font-weight:bold;color:#000;-webkit-text-stroke:0.4px #000">Start</div>
<div class="btn" style="left:59px;top:742px;width:160px;height:22px;"></div>
<svg class="abs" style="left:63px;top:744px" width="16" height="18" viewBox="0 0 16 18"><path d="M2 3 L4 1 H14 V15 L12 17 H2Z" fill="#5a5a80"/><rect x="2" y="3" width="11" height="13" fill="#a8b0d8" stroke="#404060"/><path d="M8 4 V14" stroke="#303050" stroke-width="1"/><rect x="6" y="6" width="5" height="2" fill="#202040"/><path d="M4 5 H5 M4 8 H5 M4 11 H5 M11 5 H12 M11 11 H12" stroke="#6068a0"/></svg>
<div class="t" style="left:82px;top:747px;font-size:11px;font-weight:normal;color:#000;">Volymkontroll</div>
<div class="abs" style="left:222px;top:742px;width:159px;height:22px;border-top:1px solid #404040;border-left:1px solid #404040;border-right:1px solid #fff;border-bottom:1px solid #fff;box-shadow:inset 1px 1px 0 #808080;background-color:#e8e6e2;background-image:repeating-conic-gradient(#fff 0 25%, #d4d0c8 0 50%);background-size:2px 2px"></div>
<svg class="abs" style="left:226px;top:744px" width="18" height="18" viewBox="0 0 18 18"><rect x="2" y="5" width="3" height="5" fill="#202020"/><path d="M5 5 L9 2 V13 L5 10Z" fill="#808080" stroke="#000" stroke-width="0.8"/><path d="M11 4 Q13 7.5 11 11 M13 2.5 Q16 7.5 13 12.5" stroke="#000" stroke-width="1.4" fill="none"/><path d="M2 17 Q4 14 6 16 Q8 13 10 15 Q12 12 15 14" stroke="#000" stroke-width="1.6" fill="none"/></svg>
<div class="t" style="left:246px;top:747px;font-size:12px;font-weight:bold;color:#000;-webkit-text-stroke:0.25px #000">ATB Optitest</div>
<div class="btn" style="left:385px;top:742px;width:160px;height:22px;"></div>
<svg class="abs" style="left:390px;top:745px" width="14" height="16" viewBox="0 0 14 16"><path d="M3 2 L10 2 L12 14 L5 14Z" fill="#d0a070"/><path d="M5 4 L6 12" stroke="#e03020" stroke-width="2"/><path d="M9 3 L8 12" stroke="#30a030" stroke-width="2"/></svg>
<div class="t" style="left:408px;top:747px;font-size:11px;font-weight:normal;color:#000;letter-spacing:-0.2px">gamlalillaatbrum - Paint</div>
<div class="abs" style="left:866px;top:746px;width:16px;height:16px;background:#0a246a"></div>
<div class="t" style="left:867px;top:749px;font-size:11px;font-weight:normal;color:#fff;">SV</div>
<div class="abs" style="left:886px;top:742px;width:1px;height:22px;background:#808080"></div>
<div class="abs" style="left:887px;top:742px;width:1px;height:22px;background:#fff"></div>
<div class="abs" style="left:891px;top:742px;width:131px;height:23px;border-top:1px solid #808080;border-left:1px solid #808080;border-right:1px solid #fff;border-bottom:1px solid #fff"></div>
<svg class="abs" style="left:892px;top:742px" width="92" height="24" viewBox="0 0 92 24"><path d="M8 10 L4.5 12.5 L8 15 M12 10 L8.5 12.5 L12 15" fill="none" stroke="#000" stroke-width="1.6"/><path d="M20 15 L29 10 L32 13 L23 18Z" fill="#c8c8c8" stroke="#606060" stroke-width="0.8"/><path d="M22 17 L25 20" stroke="#505050" stroke-width="1.2"/><path d="M17 8 L20 4 L21 6 L26 4 L27 7 L23 9 L24 11 L19 11Z" fill="#30c030" stroke="#108010" stroke-width="0.6"/><circle cx="40.5" cy="10" r="5" fill="#808080" stroke="#404040" stroke-width="1.2"/><circle cx="40" cy="9.5" r="2.2" fill="#c0c0c0"/><path d="M44 18 Q47 17 49 14 M45 20 Q49 19 51 15" stroke="#9090e0" fill="none" stroke-width="1"/><circle cx="60.5" cy="11.5" r="7.5" fill="#1840b0"/><circle cx="58" cy="8" r="3" fill="#40c040"/><path d="M66 6 Q69 11 66 17" stroke="#40d040" stroke-width="2" stroke-dasharray="1.5 1" fill="none"/><rect x="72.5" y="4.5" width="14" height="10" fill="#9a9a9a"/><path d="M72.5 14.5 V4.5 H86.5" stroke="#202020" fill="none"/><rect x="73" y="17" width="4" height="2.5" fill="#202020"/><rect x="81" y="17" width="4" height="2.5" fill="#202020"/></svg>
<div class="t" style="left:986px;top:748px;font-size:11px;font-weight:normal;color:#000;">09:30</div></body></html>
